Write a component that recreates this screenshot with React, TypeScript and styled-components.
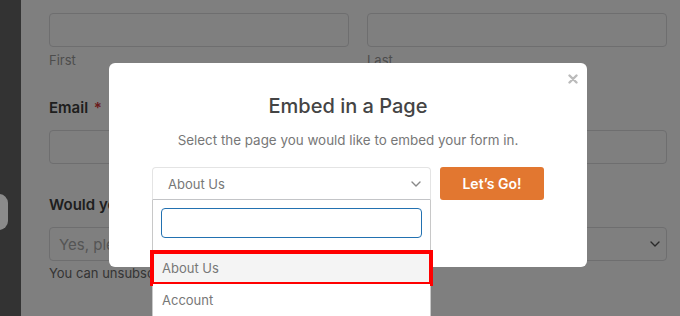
import React from 'react';
import styled, { createGlobalStyle } from 'styled-components';

const GlobalStyle = createGlobalStyle`
  html, body {
    margin: 0;
    padding: 0;
    width: 680px;
    height: 316px;
    overflow: hidden;
    font-family: Inter, "Noto Sans", sans-serif;
  }
  * { box-sizing: border-box; }
`;

const Screen = styled.div`
  position: relative;
  display: flex;
  width: 680px;
  height: 316px;
  background: #fff;
  overflow: hidden;
`;

const Sidebar = styled.div`
  width: 21px;
  flex-shrink: 0;
  background: #666;
`;

const SideTab = styled.div`
  position: absolute;
  left: -10px;
  top: 194px;
  width: 18px;
  height: 36px;
  border-radius: 9px;
  background: #8b8b8b;
  z-index: 2;
`;

const FormArea = styled.div`
  flex: 1;
  padding: 13px 13px 0 28px;
`;

const NameRow = styled.div`
  display: grid;
  grid-template-columns: 1fr 1fr;
  column-gap: 18px;
`;

const Field = styled.div`
  display: flex;
  flex-direction: column;
`;

const Input = styled.div`
  height: 34px;
  border: 1px solid #dcdcde;
  border-radius: 4px;
  background: #fff;
`;

const SubLabel = styled.div`
  margin-top: 5px;
  font-size: 13px;
  line-height: 16px;
  color: #9a9a9a;
`;

const FieldLabel = styled.div<{ $top: number }>`
  margin-top: ${p => p.$top}px;
  margin-bottom: 12px;
  font-size: 15px;
  line-height: 20px;
  font-weight: 600;
  color: #3c3c3c;
  white-space: nowrap;
`;

const Req = styled.span`
  color: #d63638;
  margin-left: 2px;
`;

const FakeSelect = styled.div`
  height: 34px;
  border: 1px solid #dcdcde;
  border-radius: 4px;
  display: flex;
  align-items: center;
  justify-content: space-between;
  padding: 0 6px 0 9px;
  font-size: 15px;
  color: #aaa;
`;

const Help = styled.div`
  margin-top: 4px;
  font-size: 13px;
  line-height: 16px;
  color: #6a6a6a;
  white-space: nowrap;
`;

const Overlay = styled.div`
  position: absolute;
  inset: 0;
  background: rgba(0, 0, 0, 0.5);
  z-index: 1;
`;

const Modal = styled.div`
  position: absolute;
  left: 109px;
  top: 63px;
  width: 478px;
  height: 204px;
  background: #fff;
  border-radius: 6px;
  z-index: 3;
  display: flex;
  flex-direction: column;
  align-items: center;
  padding-top: 31px;
`;

const Close = styled.button`
  position: absolute;
  right: 8px;
  top: 10px;
  width: 12px;
  height: 12px;
  padding: 0;
  border: none;
  background: none;
  display: flex;
  align-items: center;
  justify-content: center;
`;

const Title = styled.h2`
  margin: 0;
  font-size: 20px;
  line-height: 24px;
  font-weight: 500;
  color: #444;
`;

const Subtitle = styled.p`
  margin: 12px 0 0;
  font-size: 13.4px;
  line-height: 20px;
  color: #777;
`;

const EmbedRow = styled.div`
  margin-top: 17px;
  display: flex;
  gap: 9px;
`;

const PageSelect = styled.div`
  position: relative;
  width: 279px;
  height: 33px;
  border: 1px solid #e4e4e4;
  border-bottom-color: #c3c4c7;
  border-radius: 4px 4px 0 0;
  display: flex;
  align-items: center;
  justify-content: space-between;
  padding: 0 9px 0 15px;
  font-size: 13px;
  color: #777;
`;

const Dropdown = styled.div`
  position: absolute;
  left: -1px;
  right: -1px;
  top: 32px;
  height: 140px;
  background: #fff;
  border: 1px solid #c8c8c8;
  border-top: none;
`;

const SearchWrap = styled.div`
  padding: 8px 8px 14px;
`;

const Search = styled.div`
  height: 30px;
  border: 1.5px solid #2271b1;
  border-radius: 4px;
`;

const Option = styled.div<{ $active?: boolean }>`
  position: relative;
  height: 32px;
  display: flex;
  align-items: center;
  padding-left: 9px;
  font-size: 13px;
  color: #777;
  background: ${p => (p.$active ? '#f4f4f4' : '#fff')};
`;

const Highlight = styled.div`
  position: absolute;
  top: -2px;
  bottom: -2px;
  left: -3px;
  right: -3px;
  border: 4px solid #ff0000;
`;

const GoButton = styled.button`
  width: 104px;
  height: 33px;
  border: none;
  border-radius: 3px;
  background: #e27730;
  color: #fff;
  font-family: inherit;
  font-size: 14px;
  font-weight: 600;
`;

function Chevron({ color }: { color: string }) {
  return (
    <svg width="10" height="6" viewBox="0 0 10 6" fill="none">
      <path d="M1 1l4 4 4-4" stroke={color} strokeWidth="1.4" strokeLinecap="round" strokeLinejoin="round" />
    </svg>
  );
}

export default function App() {
  return (
    <>
      <GlobalStyle />
      <Screen>
        <Sidebar />
        <SideTab />
        <FormArea>
          <NameRow>
            <Field>
              <Input />
              <SubLabel>First</SubLabel>
            </Field>
            <Field>
              <Input />
              <SubLabel>Last</SubLabel>
            </Field>
          </NameRow>
          <FieldLabel $top={30}>
            Email <Req>*</Req>
          </FieldLabel>
          <Input />
          <FieldLabel $top={31}>Would you like to receive our newsletter?</FieldLabel>
          <FakeSelect>
            <span>Yes, please sign me up!</span>
            <Chevron color="#555" />
          </FakeSelect>
          <Help>You can unsubscribe at any time.</Help>
        </FormArea>
        <Overlay />
        <Modal>
          <Close aria-label="Close">
            <svg width="10" height="10" viewBox="0 0 10 10">
              <path d="M1.5 1.5l7 7M8.5 1.5l-7 7" stroke="#bbb" strokeWidth="2.4" strokeLinecap="round" />
            </svg>
          </Close>
          <Title>Embed in a Page</Title>
          <Subtitle>Select the page you would like to embed your form in.</Subtitle>
          <EmbedRow>
            <PageSelect>
              <span>About Us</span>
              <Chevron color="#888" />
              <Dropdown>
                <SearchWrap>
                  <Search />
                </SearchWrap>
                <Option $active>
                  About Us
                  <Highlight />
                </Option>
                <Option>Account</Option>
              </Dropdown>
            </PageSelect>
            <GoButton>Let’s Go!</GoButton>
          </EmbedRow>
        </Modal>
      </Screen>
    </>
  );
}
